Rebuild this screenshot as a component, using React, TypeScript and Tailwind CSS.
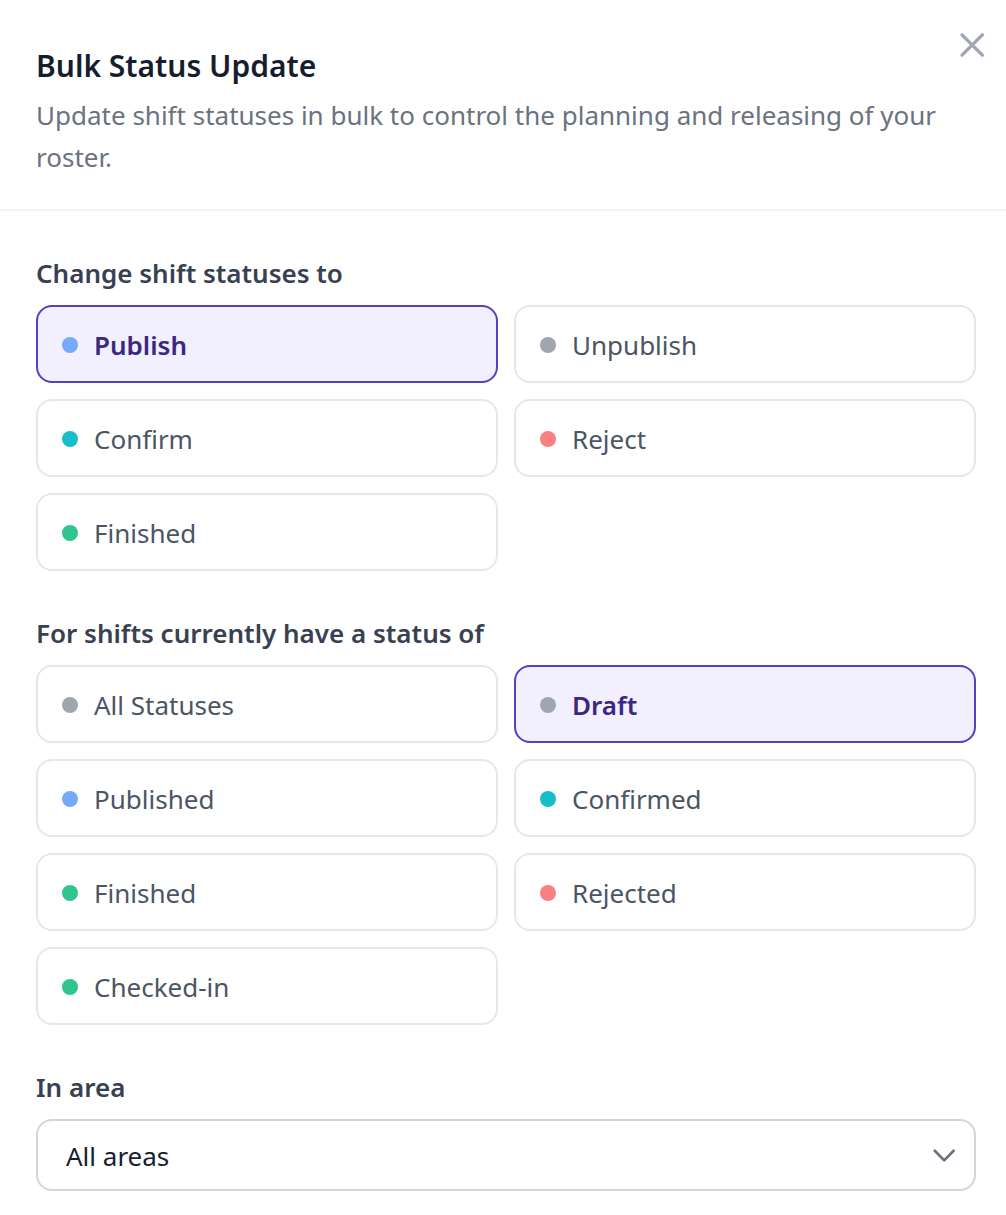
import { useState } from 'react';

interface StatusOption {
    value: string;
    label: string;
    dot: string;
}

const targetStatuses: StatusOption[] = [
    { value: 'publish', label: 'Publish', dot: 'bg-[#76a9fa]' },
    { value: 'unpublish', label: 'Unpublish', dot: 'bg-[#9fa6b2]' },
    { value: 'confirm', label: 'Confirm', dot: 'bg-[#16bdca]' },
    { value: 'reject', label: 'Reject', dot: 'bg-[#f98080]' },
    { value: 'finished', label: 'Finished', dot: 'bg-[#31c48d]' },
];

const currentStatuses: StatusOption[] = [
    { value: 'all', label: 'All Statuses', dot: 'bg-[#9fa6b2]' },
    { value: 'draft', label: 'Draft', dot: 'bg-[#9fa6b2]' },
    { value: 'published', label: 'Published', dot: 'bg-[#76a9fa]' },
    { value: 'confirmed', label: 'Confirmed', dot: 'bg-[#16bdca]' },
    { value: 'finished', label: 'Finished', dot: 'bg-[#31c48d]' },
    { value: 'rejected', label: 'Rejected', dot: 'bg-[#f98080]' },
    { value: 'checked-in', label: 'Checked-in', dot: 'bg-[#31c48d]' },
];

interface StatusPickerProps {
    title: string;
    options: StatusOption[];
    selected: string;
    onSelect: (value: string) => void;
}

function StatusPicker({ title, options, selected, onSelect }: StatusPickerProps) {
    return (
        <section>
            <h2 className="text-[26px] leading-10 font-semibold text-[#374151]">{title}</h2>
            <div className="mt-3 grid grid-cols-2 gap-4">
                {options.map((option) => (
                    <button
                        key={option.value}
                        type="button"
                        aria-pressed={option.value === selected}
                        onClick={() => onSelect(option.value)}
                        className={`flex h-[78px] items-center gap-4 rounded-2xl border-2 px-6 pt-0.5 text-left text-[26px] leading-10 ${
                            option.value === selected
                                ? 'border-[#5a3fc0] bg-[#f2effe] font-semibold text-[#3b2782]'
                                : 'border-[#e5e7eb] bg-white text-[#4b5563]'
                        }`}
                    >
                        <span className={`size-4 shrink-0 rounded-full ${option.dot}`} />
                        {option.label}
                    </button>
                ))}
            </div>
        </section>
    );
}

export default function App() {
    const [target, setTarget] = useState('publish');
    const [current, setCurrent] = useState('draft');

    return (
        <div className="min-h-screen bg-white font-['Noto_Sans',sans-serif]">
            {/* Header */}
            <header className="relative border-b-2 border-[#f3f4f6] px-9 pt-11 pb-[31px]">
                <h1 className="text-[30px] leading-11 font-semibold text-[#161e2e]">Bulk Status Update</h1>
                <p className="mt-1.5 text-[26px] leading-[42px] text-[#6b7280]">
                    Update shift statuses in bulk to control the planning and releasing of your roster.
                </p>
                <button type="button" aria-label="Close" className="absolute top-5 right-2.5 text-[#9fa6b2]">
                    <svg className="size-12" viewBox="0 0 24 24" fill="none" stroke="currentColor" strokeLinecap="round" strokeLinejoin="round" strokeWidth="1.65">
                        <path d="M7 7.4l10.2 10.2M17.2 7.4l-10.2 10.2" />
                    </svg>
                </button>
            </header>

            {/* Form */}
            <div className="flex flex-col gap-[42px] py-[42px] pr-[30px] pl-9">
                <StatusPicker title="Change shift statuses to" options={targetStatuses} selected={target} onSelect={setTarget} />
                <StatusPicker title="For shifts currently have a status of" options={currentStatuses} selected={current} onSelect={setCurrent} />

                <div>
                    <label htmlFor="area" className="block text-[26px] leading-10 font-semibold text-[#374151]">
                        In area
                    </label>
                    <div className="relative mt-3">
                        <select
                            id="area"
                            className="h-[72px] w-full appearance-none rounded-2xl border-2 border-[#d2d6dc] bg-white px-7 pt-0.5 text-[26px] text-[#161e2e]"
                        >
                            <option>All areas</option>
                        </select>
                        <svg className="pointer-events-none absolute top-4 right-3 size-10 text-[#6b7280]" viewBox="0 0 20 20" fill="none" stroke="currentColor" strokeLinecap="round" strokeLinejoin="round" strokeWidth="1.35">
                            <path d="M5.4 7.9l4.7 4.8 4.7-4.8" />
                        </svg>
                    </div>
                </div>
            </div>
        </div>
    );
}
